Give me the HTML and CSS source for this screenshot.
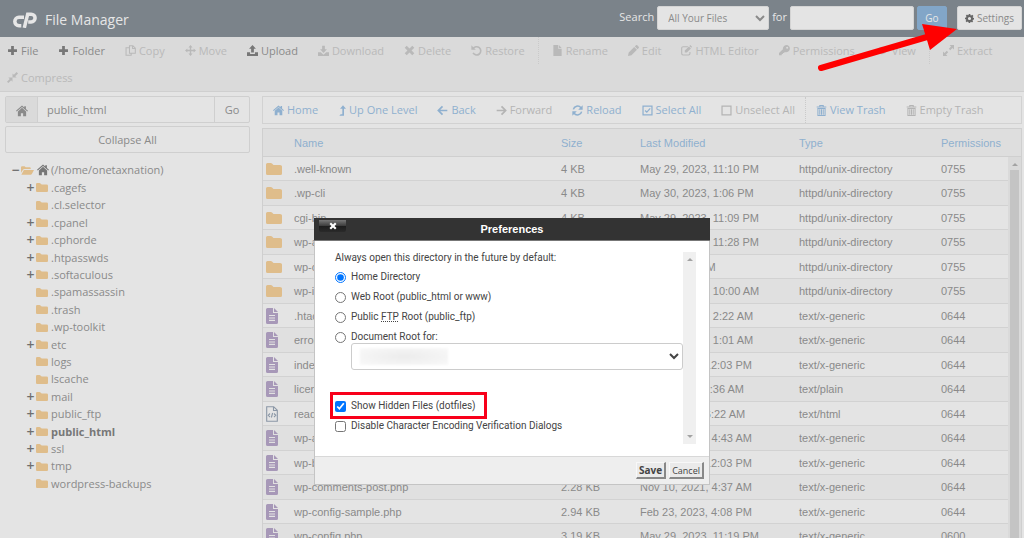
FILE: index.html
```html
<!DOCTYPE html>
<html lang="en">
<head>
<meta charset="utf-8">
<title>File Manager</title>
<link rel="stylesheet" href="styles.css">
</head>
<body>
<svg class="sprite" aria-hidden="true">
  <symbol id="plus" viewBox="0 0 16 16"><path d="M6 1.500h4V6h4.500v4H10v4.500H6V10H1.500V6H6z"/></symbol>
  <symbol id="copy" viewBox="0 0 16 16"><path d="M6.500 1h5L15 4.500V12H6.500zM11 1v4h4M6.500 4H1.500v11H9v-3" fill="none" stroke="currentColor" stroke-width="1.500"/></symbol>
  <symbol id="move" viewBox="0 0 16 16"><path d="M8 0l3 3.500H9V7h3.500V5L16 8l-3.500 3V9H9v3.500h2L8 16l-3-3.500h2V9H3.500v2L0 8l3.500-3v2H7V3.500H5z"/></symbol>
  <symbol id="upload" viewBox="0 0 16 16"><path d="M8 0l5 5.500h-3V11H6V5.500H3zM0 10.500h4.500V13h7v-2.500H16V16H0z"/></symbol>
  <symbol id="download" viewBox="0 0 16 16"><path d="M6 1h4v5h3l-5 5.500L3 6h3zM0 10.500h4L8 14l4-3.500h4V16H0z"/></symbol>
  <symbol id="cross" viewBox="0 0 16 16"><path d="M4 1l4 4 4-4 3 3-4 4 4 4-3 3-4-4-4 4-3-3 4-4-4-4z"/></symbol>
  <symbol id="restore" viewBox="0 0 16 16"><path d="M3 5.500a6 6 0 1 1 0 6" fill="none" stroke="currentColor" stroke-width="2.400"/><path d="M.5.5V7H7z"/></symbol>
  <symbol id="file" viewBox="0 0 16 16"><path d="M2 0h7v5.500h5V16H2zM10 0l4 4.500h-4z"/></symbol>
  <symbol id="pencil" viewBox="0 0 16 16"><path d="M0 16l1-5L9 3l4 4-8 8zM10 2l1.500-1.500q1-1 2 0l2 2q1 1 0 2L14 6z"/></symbol>
  <symbol id="editor" viewBox="0 0 16 16"><path d="M10 2.500H3Q1 2.500 1 4.500v8q0 2 2 2h8q2 0 2-2V10" fill="none" stroke="currentColor" stroke-width="1.600"/><path d="M5.500 11V8l6-6 3 3-6 6zM12.200 1.300L13.500 0 16 2.500 15 4z"/></symbol>
  <symbol id="key" viewBox="0 0 16 16"><path fill-rule="evenodd" d="M10.500 0a5.300 5.300 0 1 1-2 10.200L7.300 11.500H5.700v1.700H4V15H0v-3.200l5.700-5.700A5.300 5.300 0 0 1 10.500 0zm1.300 2.500a1.500 1.500 0 1 0 .1 3 1.500 1.500 0 0 0-.1-3z"/></symbol>
  <symbol id="eye" viewBox="0 0 16 16"><path fill-rule="evenodd" d="M0 8q8-11 16 0-8 11-16 0zm8-3.500a3.500 3.500 0 1 0 0 7 3.500 3.500 0 0 0 0-7z"/><circle cx="8" cy="8" r="2"/></symbol>
  <symbol id="expand" viewBox="0 0 16 16"><path d="M9.500 0H16v6.500l-2.200-2.200-3.300 3.200-2-2 3.200-3.300zM6.500 16H0V9.500l2.200 2.200 3.300-3.200 2 2-3.200 3.300z"/></symbol>
  <symbol id="compress" viewBox="0 0 16 16"><path d="M8 8V2l2 2 4-4 2 2-4 4 2 2zM8 8v6l-2-2-4 4-2-2 4-4-2-2z"/></symbol>
  <symbol id="gear" viewBox="0 0 16 16"><path fill-rule="evenodd" d="M6.600 0h2.800l.4 2.200 1.300.6L13 1.500l2 2-1.300 1.900.6 1.300 1.700.3v2.800l-2 .4-.6 1.300L14.500 13l-2 2-1.800-1.300-1.300.6L9.400 16H6.600l-.4-2-1.300-.6L3 14.500l-2-2 1.300-1.800-.6-1.300L0 9.400V6.600l2-.4.600-1.300L1.500 3l2-2 1.800 1.300 1.100-.5zM8 5.200a2.800 2.800 0 1 0 0 5.600 2.800 2.800 0 0 0 0-5.600z"/></symbol>
  <symbol id="home" viewBox="0 0 16 16"><path d="M8 3.800l5.500 4.700V15H9.500v-4h-3v4h-4V8.500zM8 .8l3 2.500V1.500h2.200v3.700L16 7.600l-1 1.200-7-6-7 6-1-1.200z"/></symbol>
  <symbol id="up" viewBox="0 0 12 16"><path d="M7.500 0L12 5.500H9V16H2l2-2.500h2.500v-8H3z"/></symbol>
  <symbol id="back" viewBox="0 0 16 16"><path d="M8 2L2 8l6 6M2.500 8H15" fill="none" stroke="currentColor" stroke-width="2.500"/></symbol>
  <symbol id="forward" viewBox="0 0 16 16"><path d="M8 2l6 6-6 6M13.500 8H1" fill="none" stroke="currentColor" stroke-width="2.500"/></symbol>
  <symbol id="reload" viewBox="0 0 16 16"><path d="M2 6.500a6.200 6.200 0 0 1 11-2.500M14 9.500A6.200 6.200 0 0 1 3 12" fill="none" stroke="currentColor" stroke-width="2.200"/><path d="M15.500.5V7H9zM.5 15.500V9H7z"/></symbol>
  <symbol id="checked" viewBox="0 0 16 16"><path d="M1.500 1.500h13v13h-13zM4.500 8l2.500 2.500 5-5.500" fill="none" stroke="currentColor" stroke-width="1.800"/></symbol>
  <symbol id="unchecked" viewBox="0 0 16 16"><path d="M1.500 1.500h13v13h-13z" fill="none" stroke="currentColor" stroke-width="1.800"/></symbol>
  <symbol id="trash" viewBox="0 0 16 16"><path d="M1 2.800h14M5.500 2.500V.8h5v1.700M2.800 5.500v9.700h10.400V5.500M5.500 6v8M8 6v8M10.500 6v8M2 5h12" fill="none" stroke="currentColor" stroke-width="1.500"/></symbol>
  <symbol id="folder" viewBox="0 0 16 12"><path d="M0 1.500Q0 0 1.500 0h3.300q.7 0 1.200.5L7.500 2H14q2 0 2 1.500V10.500Q16 12 14.500 12h-13Q0 12 0 10.500z"/></symbol>
  <symbol id="folder-open" viewBox="0 0 18 12"><path d="M0 9V1.500Q0 0 1.500 0H5l1.500 1.500H12q1.500 0 1.500 1.500v1H5Q3.500 4 2.800 5zM4 5.200h14L15 11q-.5 1-1.500 1H.5z"/></symbol>
  <symbol id="doc" viewBox="0 0 12 16"><path fill-rule="evenodd" d="M0 1.500Q0 0 1.500 0H7v5h5v9.500q0 1.500-1.500 1.500h-9Q0 16 0 14.500zM3 7v1.100h6V7zm0 2.400v1.100h6V9.400zm0 2.400v1.100h6v-1.100zM8 0l4 4H8z"/></symbol>
  <symbol id="code" viewBox="0 0 12 16"><path d="M.7.7h7l3.600 3.600v11H.7zM7.500.7v3.800h3.800M4 7.500L2.300 9.300 4 11M8 7.500l1.700 1.800L8 11M6.600 7l-1.200 4.500" fill="none" stroke="currentColor" stroke-width="1.100"/></symbol>
  <symbol id="logo" viewBox="0 0 24 16"><path d="M11 5.300H6A4.200 4.200 0 0 0 6 13.700h2.300M11.300 15.800L14.700 2.200h3.500a3.900 3.900 0 0 1 0 7.800h-3" fill="none" stroke="currentColor" stroke-width="3.500"/></symbol>
</svg>

<header class="topbar">
  <svg class="logo"><use href="#logo"/></svg>
  <h1>File Manager</h1>
  <form class="search">
    <label for="scope">Search</label>
    <select id="scope"><option>All Your Files</option></select>
    <label for="query">for</label>
    <input id="query" type="text">
    <button class="go" type="button">Go</button>
    <button class="settings" type="button"><svg class="icon"><use href="#gear"/></svg>Settings</button>
  </form>
</header>

<nav class="toolbar">
  <button><svg class="icon"><use href="#plus"/></svg>File</button>
  <button><svg class="icon"><use href="#plus"/></svg>Folder</button>
  <button disabled><svg class="icon"><use href="#copy"/></svg>Copy</button>
  <button disabled><svg class="icon"><use href="#move"/></svg>Move</button>
  <button><svg class="icon"><use href="#upload"/></svg>Upload</button>
  <button disabled><svg class="icon"><use href="#download"/></svg>Download</button>
  <button disabled><svg class="icon"><use href="#cross"/></svg>Delete</button>
  <button disabled><svg class="icon"><use href="#restore"/></svg>Restore</button>
  <button disabled class="divided"><svg class="icon"><use href="#file"/></svg>Rename</button>
  <button disabled><svg class="icon"><use href="#pencil"/></svg>Edit</button>
  <button disabled><svg class="icon"><use href="#editor"/></svg>HTML Editor</button>
  <button disabled><svg class="icon"><use href="#key"/></svg>Permissions</button>
  <button disabled><svg class="icon wide"><use href="#eye"/></svg>View</button>
  <button disabled class="divided"><svg class="icon"><use href="#expand"/></svg>Extract</button>
  <button disabled><svg class="icon"><use href="#compress"/></svg>Compress</button>
</nav>

<main class="workspace">
  <aside class="sidebar">
    <form class="path">
      <button type="button" class="path-home" aria-label="Home"><svg class="icon"><use href="#home"/></svg></button>
      <input type="text" aria-label="Path" value="public_html">
      <button type="button" class="path-go">Go</button>
    </form>
    <button class="collapse">Collapse All</button>
    <div class="root"><span class="sign">−</span><svg class="open"><use href="#folder-open"/></svg><svg class="icon"><use href="#home"/></svg>(/home/onetaxnation)</div>
    <ul class="tree">
      <li><span class="sign">+</span><svg><use href="#folder"/></svg>.cagefs</li>
      <li><span class="sign"></span><svg><use href="#folder"/></svg>.cl.selector</li>
      <li><span class="sign">+</span><svg><use href="#folder"/></svg>.cpanel</li>
      <li><span class="sign">+</span><svg><use href="#folder"/></svg>.cphorde</li>
      <li><span class="sign">+</span><svg><use href="#folder"/></svg>.htpasswds</li>
      <li><span class="sign">+</span><svg><use href="#folder"/></svg>.softaculous</li>
      <li><span class="sign"></span><svg><use href="#folder"/></svg>.spamassassin</li>
      <li><span class="sign"></span><svg><use href="#folder"/></svg>.trash</li>
      <li><span class="sign"></span><svg><use href="#folder"/></svg>.wp-toolkit</li>
      <li><span class="sign">+</span><svg><use href="#folder"/></svg>etc</li>
      <li><span class="sign"></span><svg><use href="#folder"/></svg>logs</li>
      <li><span class="sign"></span><svg><use href="#folder"/></svg>lscache</li>
      <li><span class="sign">+</span><svg><use href="#folder"/></svg>mail</li>
      <li><span class="sign">+</span><svg><use href="#folder"/></svg>public_ftp</li>
      <li class="current"><span class="sign">+</span><svg><use href="#folder"/></svg>public_html</li>
      <li><span class="sign">+</span><svg><use href="#folder"/></svg>ssl</li>
      <li><span class="sign">+</span><svg><use href="#folder"/></svg>tmp</li>
      <li><span class="sign"></span><svg><use href="#folder"/></svg>wordpress-backups</li>
    </ul>
  </aside>

  <section class="files">
    <nav class="filenav">
      <button><svg class="icon"><use href="#home"/></svg>Home</button>
      <button><svg class="icon slim"><use href="#up"/></svg>Up One Level</button>
      <button><svg class="icon"><use href="#back"/></svg>Back</button>
      <button disabled><svg class="icon"><use href="#forward"/></svg>Forward</button>
      <button><svg class="icon"><use href="#reload"/></svg>Reload</button>
      <button><svg class="icon"><use href="#checked"/></svg>Select All</button>
      <button disabled><svg class="icon"><use href="#unchecked"/></svg>Unselect All</button>
      <button class="divided"><svg class="icon"><use href="#trash"/></svg>View Trash</button>
      <button disabled><svg class="icon"><use href="#trash"/></svg>Empty Trash</button>
    </nav>
    <div class="listing">
      <table>
        <colgroup><col class="c-icon"><col><col class="c-size"><col class="c-date"><col class="c-type"><col class="c-perm"></colgroup>
        <thead><tr><th></th><th>Name</th><th>Size</th><th>Last Modified</th><th>Type</th><th>Permissions</th></tr></thead>
        <tbody>
          <tr><td><svg class="dir"><use href="#folder"/></svg></td><td>.well-known</td><td>4 KB</td><td>May 29, 2023, 11:10 PM</td><td>httpd/unix-directory</td><td>0755</td></tr>
          <tr><td><svg class="dir"><use href="#folder"/></svg></td><td>.wp-cli</td><td>4 KB</td><td>May 30, 2023, 1:06 PM</td><td>httpd/unix-directory</td><td>0755</td></tr>
          <tr><td><svg class="dir"><use href="#folder"/></svg></td><td>cgi-bin</td><td>4 KB</td><td>May 29, 2023, 11:09 PM</td><td>httpd/unix-directory</td><td>0755</td></tr>
          <tr><td><svg class="dir"><use href="#folder"/></svg></td><td>wp-admin</td><td>4 KB</td><td>May 29, 2023, 11:28 PM</td><td>httpd/unix-directory</td><td>0755</td></tr>
          <tr><td><svg class="dir"><use href="#folder"/></svg></td><td>wp-content</td><td>4 KB</td><td>Today, 9:43 PM</td><td>httpd/unix-directory</td><td>0755</td></tr>
          <tr><td><svg class="dir"><use href="#folder"/></svg></td><td>wp-includes</td><td>12 KB</td><td>May 30, 2023, 10:00 AM</td><td>httpd/unix-directory</td><td>0755</td></tr>
          <tr><td><svg class="doc"><use href="#doc"/></svg></td><td>.htaccess</td><td>1 KB</td><td>May 30, 2023, 2:22 AM</td><td>text/x-generic</td><td>0644</td></tr>
          <tr><td><svg class="doc"><use href="#doc"/></svg></td><td>error_log</td><td>1 KB</td><td>May 30, 2023, 1:01 AM</td><td>text/x-generic</td><td>0644</td></tr>
          <tr><td><svg class="doc"><use href="#doc"/></svg></td><td>index.php</td><td>405 bytes</td><td>Feb 6, 2020, 12:03 PM</td><td>text/x-generic</td><td>0644</td></tr>
          <tr><td><svg class="doc"><use href="#doc"/></svg></td><td>license.txt</td><td>19 KB</td><td>Jan 1, 2023, 5:36 AM</td><td>text/plain</td><td>0644</td></tr>
          <tr><td><svg class="doc code"><use href="#code"/></svg></td><td>readme.html</td><td>7 KB</td><td>Mar 5, 2023, 6:22 AM</td><td>text/html</td><td>0644</td></tr>
          <tr><td><svg class="doc"><use href="#doc"/></svg></td><td>wp-activate.php</td><td>7 KB</td><td>Sep 17, 2022, 4:43 AM</td><td>text/x-generic</td><td>0644</td></tr>
          <tr><td><svg class="doc"><use href="#doc"/></svg></td><td>wp-blog-header.php</td><td>351 bytes</td><td>Feb 6, 2020, 12:03 PM</td><td>text/x-generic</td><td>0644</td></tr>
          <tr><td><svg class="doc"><use href="#doc"/></svg></td><td>wp-comments-post.php</td><td>2.28 KB</td><td>Nov 10, 2021, 4:37 AM</td><td>text/x-generic</td><td>0644</td></tr>
          <tr><td><svg class="doc"><use href="#doc"/></svg></td><td>wp-config-sample.php</td><td>2.94 KB</td><td>Feb 23, 2023, 4:08 PM</td><td>text/x-generic</td><td>0644</td></tr>
          <tr><td><svg class="doc"><use href="#doc"/></svg></td><td>wp-config.php</td><td>3.19 KB</td><td>May 29, 2023, 11:19 PM</td><td>text/x-generic</td><td>0600</td></tr>
        </tbody>
      </table>
      <div class="list-scroll"><i class="arrow-up"></i><span class="thumb"></span></div>
    </div>
  </section>
</main>

<div class="dialog" role="dialog" aria-labelledby="dialog-title">
  <div class="dialog-head">
    <button class="close" aria-label="Close"><svg><use href="#cross"/></svg></button>
    <h2 id="dialog-title">Preferences</h2>
  </div>
  <div class="dialog-body">
    <form class="options" id="prefs">
      <p>Always open this directory in the future by default:</p>
      <label><input type="radio" name="dir" checked>Home Directory</label>
      <label><input type="radio" name="dir">Web Root (public_html or www)</label>
      <label><input type="radio" name="dir"><span>Public <abbr title="File Transfer Protocol">FTP</abbr> Root (public_ftp)</span></label>
      <label><input type="radio" name="dir">Document Root for:</label>
      <div class="domain"><select aria-label="Document root domain"><option></option></select><span class="smudge"></span></div>
      <label class="marked"><input type="checkbox" checked>Show Hidden Files (dotfiles)</label>
      <label><input type="checkbox">Disable Character Encoding Verification Dialogs</label>
    </form>
    <div class="dialog-scroll"><i class="arrow-up"></i><i class="arrow-down"></i></div>
  </div>
  <div class="dialog-foot"><button class="save">Save</button><button>Cancel</button></div>
</div>

<svg class="pointer" viewBox="0 0 142 50" aria-hidden="true"><path d="M6 46L112 15" stroke="#f00" stroke-width="6" stroke-linecap="round"/><path d="M107 2l35 5-27 21z" fill="#f00"/></svg>
</body>
</html>
```

FILE: styles.css
```css
*, *::before, *::after { box-sizing: border-box; }

body {
  margin: 0;
  height: 100vh;
  overflow: hidden;
  position: relative;
  background: #e4e4e4;
  color: #8a8a8a;
  font: 11px/16px "Open Sans", "Noto Sans", sans-serif;
}

button, input, select { font: inherit; color: inherit; margin: 0; }
svg { fill: currentColor; flex: none; }
.sprite { position: absolute; width: 0; height: 0; }
.icon { width: 11px; height: 11px; }
.icon.slim { width: 8px; }
.icon.wide { width: 14px; }

/* Top bar */
.topbar {
  display: flex;
  align-items: center;
  height: 37px;
  padding: 0 2px 0 13px;
  background: #7b838a;
  color: #e6e6e6;
}
.logo { width: 24px; height: 16px; margin-top: 3px; }
.topbar h1 { margin: 3px 0 0 8px; font-size: 14px; font-weight: 400; line-height: 20px; }
.search { display: flex; align-items: center; margin: 0 0 1px auto; }
.search label { margin: 0 3px 2px 0; }
.search select, .search input, .search button {
  height: 24px;
  border: 1px solid #d4d4d4;
  border-radius: 2px;
  background: #e4e4e4;
  color: #8a8a8a;
}
.search select { width: 112px; padding: 0 6px; margin-right: 3px; font-size: 10px; }
.search input { width: 124px; }
.search .go { width: 30px; margin-left: 3px; padding: 0; border-color: #82a6c8; background: #82a6c8; color: #e6e6e6; font-size: 10px; }
.search .settings {
  display: flex;
  align-items: center;
  justify-content: center;
  gap: 3px;
  width: 65px;
  margin-left: 10px;
  padding: 0;
  font-size: 10px;
}
.settings .icon { width: 9px; height: 9px; color: #666; }

/* Toolbars */
.toolbar, .filenav { display: flex; flex-wrap: wrap; }
.toolbar { background: #dadada; border-bottom: 1px solid #cfcfcf; }
.toolbar button, .filenav button {
  display: flex;
  align-items: center;
  gap: 3px;
  padding: 0 10px;
  border: 0;
  background: none;
  white-space: nowrap;
}
.toolbar button { height: 27px; padding: 0 13px 0 7px; }
.toolbar .icon { color: #777; }
.toolbar button:disabled, .toolbar button:disabled .icon { color: #b9b9b9; }
.toolbar .divided, .filenav .divided { border-left: 1px dotted #cacaca; }
.toolbar .divided { padding-left: 13px; }

/* Workspace */
.workspace { display: flex; gap: 12px; padding: 4px 2px 0 5px; }
.sidebar { width: 245px; flex: none; }
.path { display: flex; height: 27px; margin-bottom: 3px; border: 1px solid #cfcfcf; border-radius: 2px; }
.path input { flex: 1; min-width: 0; padding: 0 9px; border: 0; background: none; }
.path button { padding: 0; border: 0; background: none; }
.path .path-home { width: 32px; border-right: 1px solid #cfcfcf; background: #dadada; }
.path .path-go { width: 35px; border-left: 1px solid #cfcfcf; }
.path .icon { width: 12px; height: 12px; vertical-align: middle; }
.collapse { width: 100%; height: 27px; border: 1px solid #cfcfcf; border-radius: 2px; background: none; }

.root { display: flex; align-items: center; height: 18px; margin-top: 8px; padding-left: 6px; }
.root .open { width: 13px; height: 9px; margin: 0 3px 0 1px; color: #dfbd8b; }
.root .icon { width: 12px; height: 12px; margin-right: 2px; color: #777; }
.sign { width: 9px; color: #6f6f6f; font-weight: 600; font-size: 14px; line-height: 16px; text-align: center; }
.tree { margin: 0; padding: 0 0 0 21px; list-style: none; }
.tree li { display: flex; align-items: center; height: 17px; }
.tree li:nth-child(5n+2), .tree li:nth-child(5n+4) { height: 18px; }
.tree svg { width: 12px; height: 9px; margin: 0 3px 0 1px; color: #dfbd8b; }
.tree .current { font-weight: 700; color: #777; }

/* File listing */
.files { flex: 1; min-width: 0; }
.filenav { height: 28px; margin-bottom: 4px; border: 1px solid #d2d2d2; color: #8fb0cf; }
.filenav button:disabled { color: #b4b4b4; }

.listing { position: relative; border: 1px solid #cfcfcf; font-family: "Liberation Sans", Arial, sans-serif; }
.listing table { width: 100%; border-collapse: separate; border-spacing: 0; table-layout: fixed; }
.c-icon { width: 31px; }
.c-size { width: 79px; }
.c-date { width: 159px; }
.c-type { width: 142px; }
.c-perm { width: 80px; }
.listing th { height: 28px; padding: 0; border-bottom: 1px solid #cfcfcf; background: #dedede; color: #8fb0cf; font-weight: 400; text-align: left; }
.listing td { height: 24px; padding: 0; border-bottom: 1px solid #d2d2d2; line-height: 16px; white-space: nowrap; }
.listing tr:nth-child(even) td { height: 25px; background: #e0e0e0; }
.listing td svg { display: block; margin-left: 3px; }
.dir { width: 16px; height: 12px; color: #dfbd8b; }
.doc { width: 12px; height: 16px; color: #a798b8; }
.doc.code { color: #8b97a6; }
.list-scroll { position: absolute; top: 28px; right: 0; bottom: 0; width: 13px; padding: 6px 2px 0; background: #dadada; }
.thumb { display: block; height: 100%; margin-top: 4px; background: #c4c4c4; }
.arrow-up, .arrow-down { display: block; width: 6px; margin: 0 auto; border: 3px solid transparent; }
.arrow-up { border-top: 0; border-bottom-color: #a3a3a3; }
.arrow-down { border-bottom: 0; border-top-color: #a3a3a3; }

/* Preferences dialog */
.dialog {
  position: absolute;
  top: 218px;
  left: 50%;
  width: 396px;
  transform: translateX(-50%);
  border: 1px solid #c4c4c4;
  border-top: 0;
  background: #fff;
  color: #444;
  font: 10px/16px Roboto, "Liberation Sans", sans-serif;
}
.dialog-head { position: relative; margin: 0 -1px; background: #333; border-bottom: 1px solid #777; }
.dialog-head h2 { margin: 0; color: #fff; font-family: "Liberation Sans", Arial, sans-serif; font-size: 11px; line-height: 22px; text-align: center; }
.close {
  position: absolute;
  top: 2px;
  left: 5px;
  display: flex;
  align-items: center;
  justify-content: center;
  width: 27px;
  height: 12px;
  padding: 0;
  border: 0;
  border-radius: 0 0 2px 2px;
  background: linear-gradient(#777, #3a3a3a 50%, #1c1c1c 50%, #2a2a2a);
  color: #fff;
}
.close svg { width: 8px; height: 8px; }
.dialog-body { display: flex; padding: 0 13px 0 20px; }
.options { flex: 1; padding: 8px 0 20px; }
.options p { margin: 0; line-height: 18px; }
.options label { display: flex; align-items: center; gap: 5px; height: 20px; }
.options label input { width: 11px; height: 11px; }
.options abbr { text-decoration: underline dotted; }
.domain { position: relative; margin: -4px 0 26px 16px; }
.domain select { display: block; width: 100%; height: 27px; border: 1px solid #ccc; border-radius: 3px; background: #fff; }
.smudge { position: absolute; top: 5px; left: 9px; width: 88px; height: 17px; background: radial-gradient(#ececec, #f9f9f9); filter: blur(1px); }
.marked { position: relative; }
.marked::after { content: ""; position: absolute; top: -4px; left: -5px; width: 157px; height: 27px; border: 3px solid #f8001a; }
.dialog-scroll { display: flex; flex-direction: column; justify-content: space-between; width: 13px; margin: 11px 0 12px; padding: 6px 0; background: #f0f0f0; }
.dialog-foot { display: flex; justify-content: flex-end; gap: 3px; padding: 5px; border-top: 1px solid #d8d8d8; background: #eee; }
.dialog-foot button {
  height: 17px;
  padding: 0 2px;
  border: 1px solid #f8f8f8;
  border-right: 2px solid #888;
  border-bottom: 2px solid #888;
  background: #eaeaea;
  font-family: "Open Sans", sans-serif;
  font-size: 9px;
  line-height: 13px;
}
.dialog-foot .save { font-weight: 700; font-size: 10px; }

/* Callout arrow */
.pointer { position: absolute; top: 22px; right: 67px; width: 142px; height: 50px; }
```
